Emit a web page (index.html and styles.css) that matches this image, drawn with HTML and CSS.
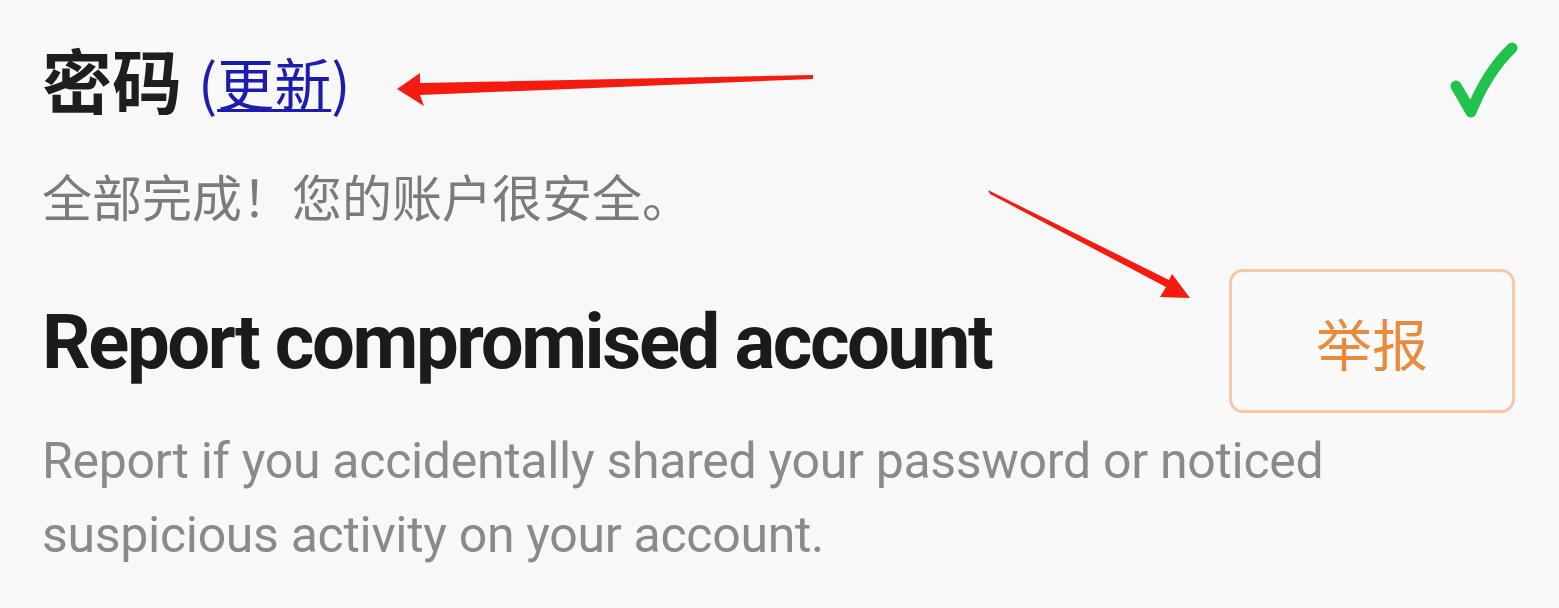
FILE: index.html
```html
<!DOCTYPE html>
<html lang="zh">
<head>
<meta charset="utf-8">
<link rel="stylesheet" href="styles.css">
</head>
<body>
<main class="page">
  <section class="item">
    <div class="item-head">
      <h1 class="title-zh">密码 <a class="update-link" href="#">(<span class="u">更新</span>)</a></h1>
      <svg class="check" viewBox="0 0 70 80" width="70" height="80" aria-hidden="true">
        <path d="M7 44 L22 70 Q38 30 63 6" fill="none" stroke="#1fc24a" stroke-width="11" stroke-linecap="round" stroke-linejoin="round"/>
      </svg>
    </div>
    <p class="sub-zh">全部完成！您的账户很安全。</p>
  </section>
  <section class="item report">
    <div class="report-head">
      <h2 class="title-en">Report compromised account</h2>
      <button class="report-btn" type="button">举报</button>
    </div>
    <p class="desc">Report if you accidentally shared your password or noticed suspicious activity on your account.</p>
  </section>
  <svg class="arrows" width="1559" height="608" viewBox="0 0 1559 608" aria-hidden="true">
    <polygon fill="#f41c10" points="813,75 813,79 420,95 424,106 397,89 420,73 420,83"/>
    <polygon fill="#f41c10" points="988,190 990,194 1166,287 1160,297 1190,298 1172,274 1169,280"/>
  </svg>
</main>
</body>
</html>
```

FILE: styles.css
```css
html, body {
  margin: 0;
  padding: 0;
  background: #f8f8f9;
}
body {
  font-family: Roboto, "Noto Sans CJK SC", sans-serif;
  width: 1559px;
  height: 608px;
  overflow: hidden;
}
.page {
  position: relative;
  padding: 27px 44px 0 42px;
  box-sizing: border-box;
  height: 608px;
}
.item-head {
  display: flex;
  align-items: flex-start;
  justify-content: space-between;
}
.title-zh {
  margin: 0;
  font-family: "Noto Sans CJK SC", sans-serif;
  font-size: 70px;
  font-weight: 700;
  line-height: 104px;
  color: #1e1e1e;
}
.update-link {
  font-family: "Noto Sans CJK SC", sans-serif;
  font-weight: 400;
  font-size: 57px;
  color: #1c1cae;
  text-decoration: none;
  position: relative;
  top: -3px;
}
.update-link .u {
  text-decoration: underline;
  text-decoration-thickness: 3px;
  text-underline-offset: 3px;
}
.check {
  margin-top: 15px;
  margin-right: -4px;
}
.sub-zh {
  margin: 29px 0 0;
  font-family: "Noto Sans CJK SC", sans-serif;
  font-size: 50px;
  line-height: 60px;
  color: #7b7b7b;
}
.report {
  margin-top: 44px;
}
.report-head {
  display: flex;
  align-items: flex-start;
  justify-content: space-between;
}
.title-en {
  margin: 28px 0 0;
  font-family: Roboto, sans-serif;
  font-weight: 700;
  font-size: 76px;
  line-height: 90px;
  letter-spacing: -2.4px;
  color: #1b1b1b;
}
.report-btn {
  width: 286px;
  height: 144px;
  border: 3px solid #f6c8a6;
  border-radius: 14px;
  background: #fafafb;
  color: #ea8a3c;
  font-family: "Noto Sans CJK SC", sans-serif;
  font-size: 56px;
  flex: none;
}
.desc {
  margin: 11px 0 0;
  font-family: Roboto, sans-serif;
  font-size: 50px;
  line-height: 74px;
  letter-spacing: -0.3px;
  color: #8a8a8a;
  width: 1320px;
}
.arrows {
  position: absolute;
  left: 0;
  top: 0;
  pointer-events: none;
}
```
